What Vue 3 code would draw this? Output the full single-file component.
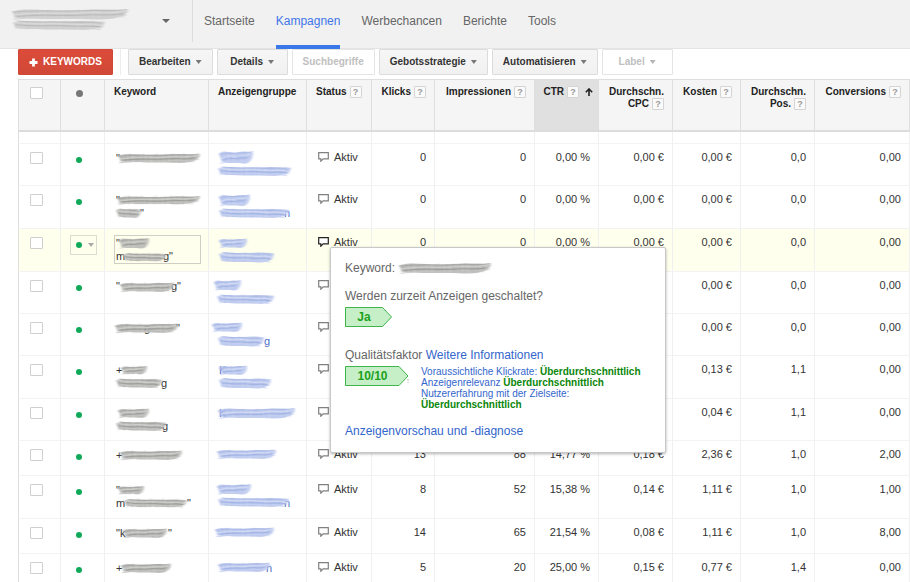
<script setup>
import { h, ref } from 'vue'

const nav = ['Startseite', 'Kampagnen', 'Werbechancen', 'Berichte', 'Tools']
const active = ref('Kampagnen')

const actions = [
  { label: 'Bearbeiten', menu: true },
  { label: 'Details', menu: true },
  { label: 'Suchbegriffe', disabled: true },
  { label: 'Gebotsstrategie', menu: true },
  { label: 'Automatisieren', menu: true },
  { label: 'Label', menu: true, disabled: true }
]

const columns = [
  { lines: ['Status'], left: true },
  { lines: ['Klicks'] },
  { lines: ['Impressionen'] },
  { lines: ['CTR'], sorted: true },
  { lines: ['Durchschn.', 'CPC'] },
  { lines: ['Kosten'] },
  { lines: ['Durchschn.', 'Pos.'] },
  { lines: ['Conversions'] }
]

// marks: [x, centre y, width, height]; bits: [text, x, baseline]
const rows = [
  { size: 'mid', status: 'Aktiv', values: ['0', '0', '0,00 %', '0,00 €', '0,00 €', '0,0', '0,00'],
    key: { marks: [[4, 14, 82, 8]], bits: [['"', 2, 18]] },
    group: { marks: [[1, 13, 34, 11], [0, 27, 73, 8]], bits: [] } },
  { size: 'tall', status: 'Aktiv', values: ['0', '0', '0,00 %', '0,00 €', '0,00 €', '0,0', '0,00'],
    key: { marks: [[3, 14, 83, 7], [2, 27, 25, 8]], bits: [['"', 2, 18], ['"', 26, 31]] },
    group: { marks: [[1, 14, 31, 10], [1, 27, 70, 8]], bits: [['n', 66, 31]] } },
  { size: 'tall', hover: true, status: 'Aktiv', values: ['0', '0', '0,00 %', '0,00 €', '0,00 €', '0,0', '0,00'],
    key: { marks: [[5, 14, 30, 9], [9, 28, 43, 7]], bits: [['"', 2, 18], ['m', 2, 31], ['g"', 49, 31]] },
    group: { marks: [[1, 14, 28, 8], [1, 28, 55, 9]], bits: [] } },
  { size: 'mid', values: ['', '', '', '', '0,00 €', '0,0', '0,00'],
    key: { marks: [[6, 15, 54, 8]], bits: [['"', 2, 18], ['g"', 57, 18]] },
    group: { marks: [[-4, 13, 27, 9], [-1, 27, 57, 8]], bits: [] } },
  { size: 'mid', values: ['', '', '', '', '0,00 €', '0,0', '0,00'],
    key: { marks: [[1, 14, 63, 8]], bits: [['"', 62, 18], ['g', 30, 18]] },
    group: { marks: [[-6, 13, 30, 8], [0, 27, 46, 9]], bits: [['g', 46, 31]] } },
  { size: 'tall', values: ['', '', '', '', '0,13 €', '1,1', '0,00'],
    key: { marks: [[7, 14, 26, 7], [2, 27, 46, 8]], bits: [['+', 2, 18], ['g', 47, 31]] },
    group: { marks: [[1, 14, 28, 8], [1, 27, 52, 9]], bits: [['K', 1, 18]] } },
  { size: 'mid', values: ['', '', '', '', '0,04 €', '1,1', '0,00'],
    key: { marks: [[4, 14, 31, 8], [2, 27, 50, 8]], bits: [['g', 48, 31]] },
    group: { marks: [[0, 14, 77, 9]], bits: [['K', 1, 18]] } },
  { size: 'short', status: 'Aktiv', values: ['13', '88', '14,77 %', '0,18 €', '2,36 €', '1,0', '2,00'],
    key: { marks: [[6, 14, 62, 8]], bits: [['+', 2, 18]] },
    group: { marks: [[-1, 13, 59, 8]], bits: [] } },
  { size: 'tall', status: 'Aktiv', values: ['8', '52', '15,38 %', '0,14 €', '1,11 €', '1,0', '1,00'],
    key: { marks: [[4, 14, 26, 7], [10, 27, 63, 7]], bits: [['"', 2, 18], ['m', 2, 31], ['"', 73, 31]] },
    group: { marks: [[-1, 13, 34, 9], [0, 26, 71, 8]], bits: [['n', 66, 31]] } },
  { size: 'short', status: 'Aktiv', values: ['14', '65', '21,54 %', '0,08 €', '1,11 €', '1,0', '8,00'],
    key: { marks: [[9, 14, 44, 8]], bits: [['"k', 2, 18], ['"', 54, 18]] },
    group: { marks: [[-3, 13, 59, 8]], bits: [] } },
  { size: 'short', status: 'Aktiv', values: ['5', '20', '25,00 %', '0,15 €', '0,77 €', '1,4', '0,00'],
    key: { marks: [[7, 14, 50, 8]], bits: [['+', 2, 18]] },
    group: { marks: [[0, 13, 52, 8]], bits: [['n', 48, 18]] } }
]

const tones = {
  grey: { fill: '#b8b8b6', inks: ['#a4a4a2', '#d0d0ce', '#9a9a98', '#c6c6c4'], text: '#333' },
  blue: { fill: '#bac7ed', inks: ['#a9b9e6', '#d3dcf5', '#9fb1e3', '#c4d0f2'], text: '#4a6ccc' },
  pale: { fill: '#cccccc', inks: ['#bcbcbc', '#dadada', '#b8b8b8', '#d2d2d2'], text: '#999' }
}

function wave(x, y, w, bend) {
  return `M${x} ${y + bend} C${x + w * 0.3} ${y - bend} ${x + w * 0.4} ${y + bend} ${x + w * 0.6} ${y} S${x + w * 0.86} ${y + bend} ${x + w} ${y - bend}`
}

// Tapered outline of one smear
function body(x, y, w, t) {
  const r = t * 0.6
  return `M${x} ${y - r * 0.5} C${x + w * 0.15} ${y - r * 1.2} ${x + w * 0.3} ${y - r * 0.5} ${x + w * 0.5} ${y - r * 0.7} S${x + w * 0.85} ${y - r * 0.9} ${x + w} ${y - r * 0.7} C${x + w} ${y + r * 0.2} ${x + w * 0.9} ${y + r * 1.2} ${x + w * 0.7} ${y + r} S${x + w * 0.2} ${y + r * 1.1} ${x + 3} ${y + r * 0.7} Z`
}

// Hand-smeared names: a soft body, faint letter stems and streaks running through it
const Smudge = (props) => {
  const tone = tones[props.tone]
  const shapes = props.marks.flatMap(([x, y, w, t], n) => {
    const bend = (n % 2 ? -1 : 1) * t * 0.14
    const stems = []
    for (let s = 3, k = 0; s < w - 4; k++, s += 3 + ((k * 5 + n) % 4)) {
      stems.push(`M${x + s} ${y - 2 - (k % 3)}V${y + 4}`)
    }
    return [
      h('path', { d: body(x, y, w, t), fill: tone.fill, opacity: 0.85 }),
      h('path', { d: stems.join(''), stroke: tone.text, 'stroke-width': 1, opacity: 0.25 }),
      ...tone.inks.map((ink, i) => {
        const shift = ((i * 7 + n * 3) % 5) + 1
        return h('path', {
          d: wave(x + shift, y + (i - 1.5) * t * 0.24, w - shift * 2, bend * (i % 2 ? 1.6 : 1)),
          stroke: ink,
          'stroke-width': 1.2,
          opacity: 0.85
        })
      })
    ]
  })
  return h('svg', { width: props.width, height: props.height, overflow: 'visible', 'aria-hidden': 'true' }, [
    ...props.bits.map(([t, x, y]) => h('text', { x, y, 'font-size': 11, fill: tone.text }, t)),
    h('g', { fill: 'none', 'stroke-linecap': 'round', filter: 'url(#smear)' }, shapes)
  ])
}
Smudge.props = {
  tone: { default: 'grey' },
  width: { default: 86 },
  height: { default: 34 },
  marks: { default: () => [] },
  bits: { default: () => [] }
}
</script>

<template>
  <div class="page">
    <svg class="defs" width="0" height="0" aria-hidden="true">
      <filter id="smear" x="-20%" y="-60%" width="140%" height="220%">
        <feGaussianBlur stdDeviation="0.8 0.6" />
      </filter>
    </svg>

    <header class="top">
      <button class="account" aria-label="Konto">
        <Smudge tone="pale" :width="118" :height="24" :marks="[[0, 5, 116, 9], [1, 16, 92, 8]]" />
        <i class="caret"></i>
      </button>
      <nav>
        <a v-for="item in nav" :key="item" href="#" :class="{ on: item === active }" @click.prevent="active = item">{{ item }}</a>
      </nav>
    </header>

    <div class="toolbar">
      <button class="add">
        <svg width="9" height="9" viewBox="0 0 9 9" aria-hidden="true"><path d="M4.500 .5v8M.5 4.500h8" stroke="#fff" stroke-width="2.800" /></svg>
        KEYWORDS
      </button>
      <span class="rule"></span>
      <div class="actions">
        <button v-for="a in actions" :key="a.label" :disabled="a.disabled">
          {{ a.label }}<i v-if="a.menu" class="caret small"></i>
        </button>
      </div>
    </div>

    <table>
      <colgroup>
        <col class="w-check"><col class="w-dot"><col class="w-key"><col class="w-group"><col class="w-status">
        <col class="w-clicks"><col class="w-impr"><col class="w-ctr"><col class="w-cpc"><col class="w-cost"><col class="w-pos"><col>
      </colgroup>
      <thead>
        <tr>
          <th class="check"><input type="checkbox" aria-label="Alle auswählen"></th>
          <th class="dot"><i></i></th>
          <th class="left">Keyword</th>
          <th class="left">Anzeigengruppe</th>
          <th v-for="c in columns" :key="c.lines.join(' ')" :class="{ left: c.left, sorted: c.sorted }">
            <div v-for="(line, i) in c.lines" :key="line" class="headline">
              <span>{{ line }}</span>
              <button v-if="i === c.lines.length - 1" class="help" aria-label="Hilfe">?</button>
              <svg v-if="c.sorted" class="arrow" width="8" height="8" viewBox="0 0 8 8" aria-hidden="true"><path d="M4 8V1.500M.8 4.200L4 1l3.200 3.200" fill="none" stroke="#222" stroke-width="1.600" /></svg>
            </div>
          </th>
        </tr>
      </thead>
      <tbody>
        <tr class="stub"><td v-for="n in 12" :key="n"></td></tr>
        <tr v-for="(r, i) in rows" :key="i" :class="[r.size, { hover: r.hover }]">
          <td class="check"><input type="checkbox" aria-label="Zeile auswählen"></td>
          <td class="dot">
            <button v-if="r.hover" class="state" aria-label="Status ändern"><i></i><b class="caret small"></b></button>
            <i v-else></i>
          </td>
          <td class="name">
            <Smudge :marks="r.key.marks" :bits="r.key.bits" />
            <span v-if="r.hover" class="field"></span>
          </td>
          <td class="name"><a href="#" aria-label="Anzeigengruppe"><Smudge tone="blue" :marks="r.group.marks" :bits="r.group.bits" /></a></td>
          <td class="status">
            <span class="live">
              <svg width="11" height="10" viewBox="0 0 11 10" aria-hidden="true"><path d="M.7 .7h9.600v6.100H5.200L2.800 9.200V6.800H.7z" fill="#fff" stroke="currentColor" stroke-width="1.200" /></svg>
              {{ r.status }}
            </span>
            <section v-if="r.hover" class="popup">
              <p class="keyword">Keyword: <Smudge :width="96" :height="14" :marks="[[1, 7, 92, 9]]" /></p>
              <p>Werden zurzeit Anzeigen geschaltet?</p>
              <div class="tag">
                <svg width="47" height="20" viewBox="0 0 47 20" aria-hidden="true"><path d="M.5 .5h37l9 9.500-9 9.500H.5z" fill="#c6efc8" stroke="#3db54a" /></svg>
                <strong>Ja</strong>
              </div>
              <p class="quality">Qualitätsfaktor <a href="#">Weitere Informationen</a></p>
              <div class="score">
                <div class="tag wide">
                  <svg width="64" height="20" viewBox="0 0 64 20" aria-hidden="true"><path d="M.5 .5h53.500l9 9.500-9 9.500H.5z" fill="#c6efc8" stroke="#3db54a" /><path d="M63 13v4" stroke="#bbb" stroke-dasharray="2 1" /></svg>
                  <strong>10/10</strong>
                </div>
                <ul>
                  <li>Voraussichtliche Klickrate: <b>Überdurchschnittlich</b></li>
                  <li>Anzeigenrelevanz <b>Überdurchschnittlich</b></li>
                  <li>Nutzererfahrung mit der Zielseite: <b>Überdurchschnittlich</b></li>
                </ul>
              </div>
              <a href="#" class="preview">Anzeigenvorschau und -diagnose</a>
            </section>
          </td>
          <td v-for="(v, k) in r.values" :key="k" class="num">{{ v }}</td>
        </tr>
      </tbody>
    </table>
  </div>
</template>

<style>
body {
  margin: 0;
  background: #fff;
}
</style>

<style scoped>
.page {
  height: 100vh;
  overflow: hidden;
  font-family: "Liberation Sans", Arial, sans-serif;
  font-size: 11px;
  line-height: 14px;
  color: #333;
}
* {
  box-sizing: border-box;
}
button {
  font: inherit;
  color: inherit;
  margin: 0;
  cursor: pointer;
}
a {
  color: #3366cc;
  text-decoration: none;
}
.defs {
  position: absolute;
}
.caret {
  width: 8px;
  height: 4px;
  background: #666;
  clip-path: polygon(0 0, 100% 0, 50% 100%);
}
.caret.small {
  width: 6px;
  background: #777;
}

.top {
  display: flex;
  height: 49px;
  background: #f1f1f1;
  border-bottom: 1px solid #e4e4e4;
}
.account {
  display: flex;
  align-items: center;
  justify-content: space-between;
  width: 193px;
  height: 42px;
  padding: 0 22px 0 12px;
  border: 0;
  border-right: 1px solid #dcdcdc;
  background: none;
}
nav {
  display: flex;
  gap: 21px;
  padding-left: 11px;
}
nav a {
  height: 49px;
  font-size: 12px;
  line-height: 42px;
  color: #666;
}
nav a.on {
  color: #4176ea;
  border-bottom: 4px solid #3b78e7;
}

.toolbar {
  display: flex;
  align-items: center;
  padding-left: 18px;
  margin-bottom: 4px;
  font-size: 10px;
  font-weight: bold;
}
.toolbar button {
  display: flex;
  align-items: center;
  justify-content: center;
  gap: 5px;
  height: 26px;
  min-width: 71px;
  padding: 0 10px;
  border: 1px solid #dcdcdc;
  border-radius: 1px;
  background: linear-gradient(#f6f6f6, #f1f1f1);
  color: #333;
}
.toolbar button:disabled {
  background: #fff;
  border-color: #e4e4e4;
  color: #c0c0c0;
}
.toolbar button:disabled .caret {
  background: #b4b4b4;
}
.toolbar .add {
  background: linear-gradient(#dd4b39, #d14836);
  border-color: #d14836;
  color: #fff;
}
.rule {
  width: 1px;
  height: 26px;
  margin: 0 7px;
  background: #ececec;
}
.actions {
  display: flex;
  gap: 4px;
}

table {
  width: calc(100% - 18px);
  margin-left: 18px;
  table-layout: fixed;
  border-collapse: separate;
  border-spacing: 0;
}
.w-check { width: 43px; }
.w-dot { width: 44px; }
.w-key { width: 104px; }
.w-group { width: 98px; }
.w-status { width: 65px; }
.w-clicks { width: 63px; }
.w-impr { width: 100px; }
.w-ctr { width: 64px; }
.w-cpc { width: 74px; }
.w-cost { width: 68px; }
.w-pos { width: 74px; }

th {
  height: 53px;
  padding: 6px 8px 0 0;
  vertical-align: top;
  background: #f5f5f5;
  border: 1px solid #dedede;
  border-left: 0;
  border-bottom: 2px solid #dcdcdc;
  font-size: 10px;
  line-height: 12px;
  color: #222;
  text-align: right;
  white-space: nowrap;
}
th.left {
  padding-left: 9px;
  text-align: left;
}
th.sorted {
  padding-right: 5px;
  background: #e0e0e0;
}
th:first-child,
td:first-child {
  border-left: 1px solid #dedede;
}
.headline {
  display: flex;
  justify-content: flex-end;
  gap: 3px;
}
.left .headline {
  justify-content: flex-start;
}
.help {
  width: 12px;
  height: 12px;
  padding: 0;
  border: 1px solid #d4d4d4;
  border-radius: 1px;
  background: #fafafa;
  font-size: 9px;
  font-weight: bold;
  line-height: 10px;
  color: #999;
}
.arrow {
  margin: 2px 0 0 3px;
}

td {
  padding: 6px 8px 0 0;
  vertical-align: top;
  border-right: 1px solid #f0f0f0;
  border-top: 1px solid #f3f3f3;
}
.stub td {
  height: 11px;
  padding: 0;
  border-top: 0;
}
.short td { height: 35px; }
.mid td { height: 42px; }
.tall td { height: 43px; }
.hover td { background: #ffffee; }

.num {
  text-align: right;
}
.check,
td.check {
  padding: 0 0 0 11px;
  text-align: left;
}
input {
  display: block;
  appearance: none;
  width: 13px;
  height: 12px;
  margin: 8px 0 0;
  border: 1px solid #cfcfcf;
  border-radius: 1px;
  background: #fff;
}
th.check {
  padding-left: 11px;
}
th input {
  margin-top: 7px;
}
th.dot,
td.dot {
  padding: 0;
}
.dot i {
  display: block;
  width: 6px;
  height: 6px;
  border-radius: 50%;
  background: #0fa958;
}
td.dot > i {
  margin: 13px 0 0 15px;
}
th.dot > i {
  width: 7px;
  height: 7px;
  margin: 10px 0 0 15px;
  background: #777;
}
.state {
  display: flex;
  align-items: center;
  gap: 6px;
  width: 27px;
  height: 20px;
  margin: 6px 0 0 9px;
  padding: 0 1px 0 5px;
  border: 1px solid #dcdcd0;
  background: none;
}
.state .caret {
  flex: none;
  background: #aaa;
}
.state i {
  flex: none;
}
td.name {
  position: relative;
  padding: 0 0 0 9px;
}
.name svg {
  display: block;
}
.field {
  position: absolute;
  left: 9px;
  top: 6px;
  width: 87px;
  height: 29px;
  border: 1px solid #cfcfc6;
}
td.status {
  position: relative;
  padding: 6px 0 0 11px;
}
.live {
  display: flex;
  gap: 5px;
  color: #333;
}
.live svg {
  margin-top: 2px;
  color: #808080;
}
.hover .live svg {
  color: #222;
}

.popup {
  position: absolute;
  z-index: 2;
  left: 23px;
  top: 18px;
  width: 336px;
  padding: 13px 14px 14px;
  border: 1px solid #c8c8c8;
  border-radius: 2px;
  background: #fff;
  box-shadow: 0 1px 3px rgba(0, 0, 0, 0.3);
  font-size: 12px;
  color: #666;
}
.popup p {
  margin: 0;
}
.popup .keyword {
  display: flex;
  gap: 3px;
  margin-bottom: 14px;
}
.tag {
  display: grid;
  width: 47px;
  margin-top: 4px;
}
.tag.wide {
  width: 64px;
  flex: none;
}
.tag > * {
  grid-area: 1 / 1;
}
.tag strong {
  padding-right: 9px;
  line-height: 20px;
  text-align: center;
  color: #1aa11a;
}
.popup .quality {
  margin-top: 21px;
}
.score {
  display: flex;
  gap: 12px;
}
.score ul {
  margin: 4px 0 0;
  padding: 0;
  list-style: none;
  font-size: 10px;
  line-height: 11px;
  color: #3366cc;
}
.score b {
  color: #0a860a;
}
.preview {
  display: block;
  margin-top: 14px;
}
</style>
